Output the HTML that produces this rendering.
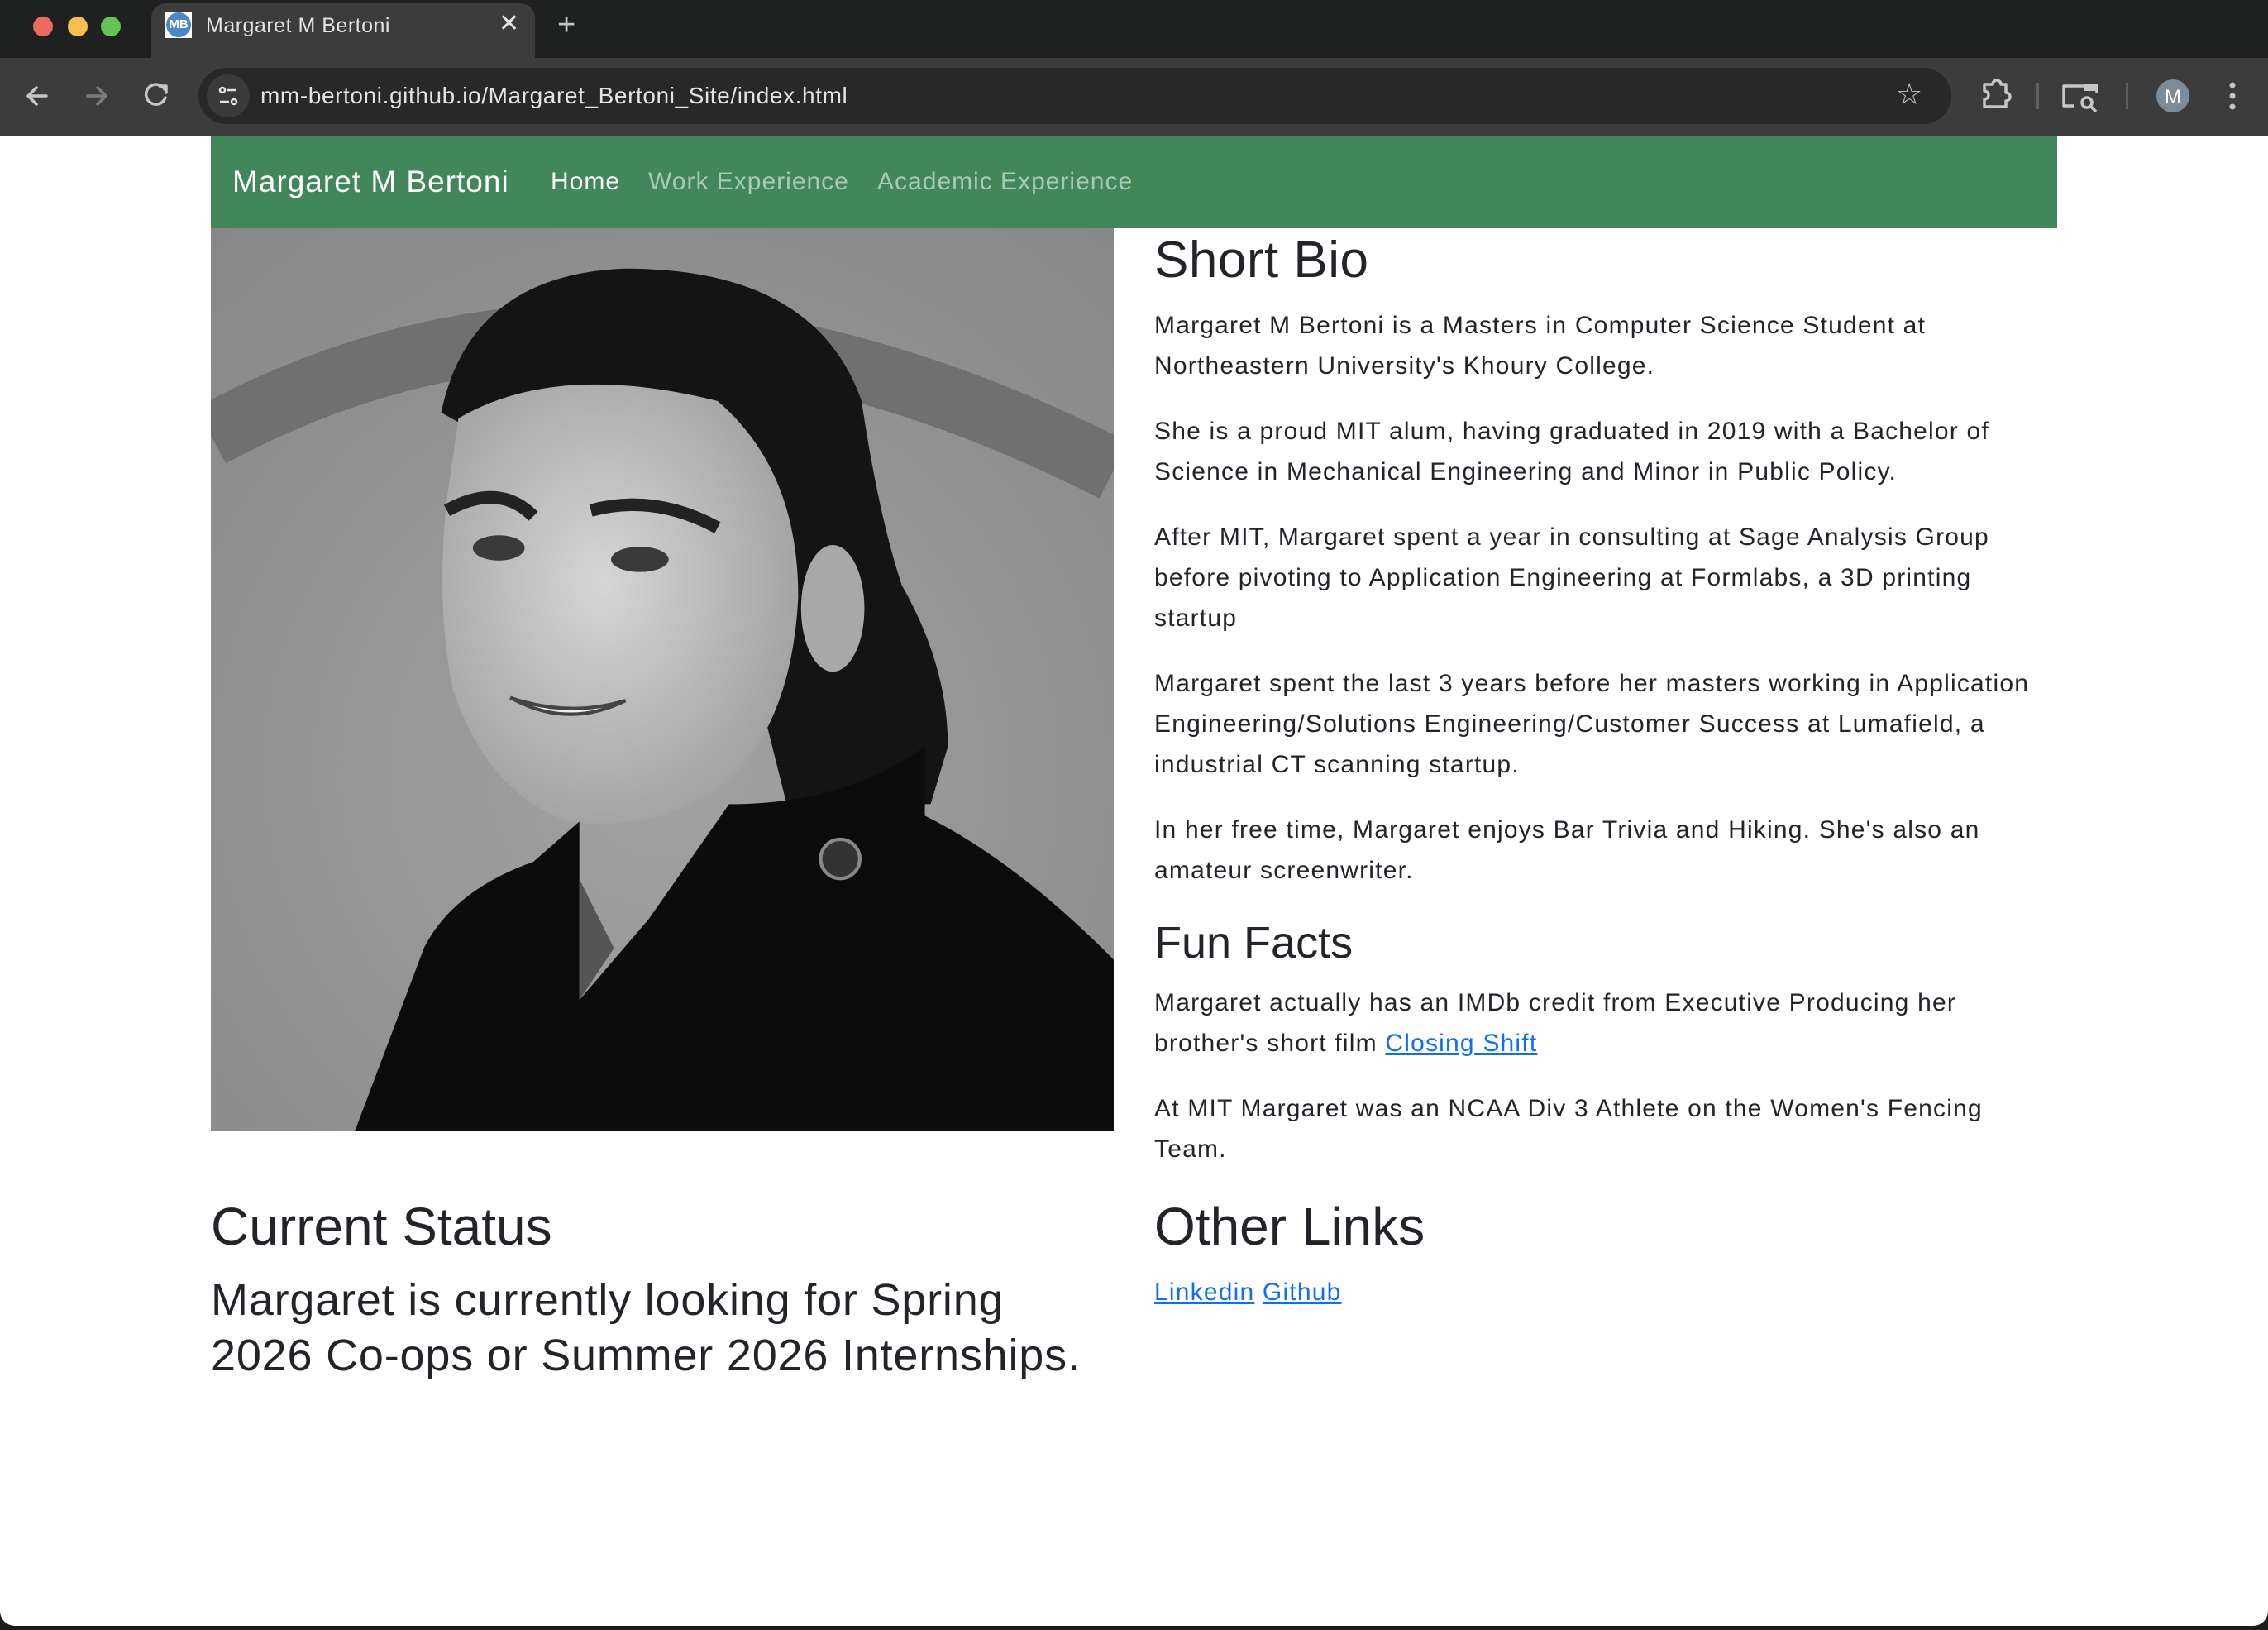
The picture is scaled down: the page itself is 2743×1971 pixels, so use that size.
<!DOCTYPE html>
<html><head><meta charset="utf-8"><style>
*{margin:0;padding:0;box-sizing:border-box}
html,body{width:2743px;height:1971px;overflow:hidden;background:#1b1d1a}
body{font-family:"Liberation Sans",sans-serif;position:relative}
.abs{position:absolute;white-space:nowrap}
#win{position:absolute;left:0;top:0;width:2743px;height:1966px;background:#fff;border-radius:0 0 18px 18px;overflow:hidden}
#tabbar{position:absolute;left:0;top:0;width:2743px;height:70px;background:#1f2020}
#tab{position:absolute;left:183px;top:4px;width:464px;height:70px;background:#3c3c3c;border-radius:18px 18px 0 0}
#toolbar{position:absolute;left:0;top:70px;width:2743px;height:94px;background:#3c3c3c}
#omni{position:absolute;left:240px;top:12px;width:2120px;height:68px;background:#282828;border-radius:34px}
#nav{position:absolute;left:255px;top:164px;width:2233px;height:112px;background:#41875a}
.txt{color:#212529;font-size:30px;line-height:49px;letter-spacing:1.2px}
.txt p{margin-bottom:30px}
a{color:#0d6efd;text-decoration:underline}
</style></head><body>
<div id="win">
<div id="tabbar">
  <div class="abs" style="left:40px;top:20px;width:24px;height:24px;border-radius:50%;background:#ee6a5f"></div>
  <div class="abs" style="left:82px;top:20px;width:24px;height:24px;border-radius:50%;background:#f5bf4f"></div>
  <div class="abs" style="left:122px;top:20px;width:24px;height:24px;border-radius:50%;background:#62c554"></div>
  <div id="tab">
    <div class="abs" style="left:17px;top:10px;width:32px;height:32px;background:#fff;"><div style="position:absolute;left:1px;top:1px;width:30px;height:30px;border-radius:50%;background:#4a86c8;color:#fff;font-size:15px;font-weight:bold;line-height:30px;text-align:center">MB</div></div>
    <div class="abs" style="left:66px;top:12px;font-size:25px;color:#e3e3e3;line-height:30px;letter-spacing:0.5px">Margaret M Bertoni</div>
    <div class="abs" style="left:420px;top:8px;font-size:30px;color:#e3e3e3;line-height:34px">✕</div>
  </div>
  <div class="abs" style="left:674px;top:8px;font-size:38px;color:#c4c7c5;line-height:44px">+</div>
</div>
<div id="toolbar">
  <svg class="abs" style="left:0;top:0" width="240" height="94" viewBox="0 0 240 94">
    <g fill="none" stroke-width="3.5" stroke-linecap="round" stroke-linejoin="round">
      <path d="M34 46 H56 M44 36 L34 46 L44 56" stroke="#c4c7c5"/>
      <path d="M106 46 H128 M118 36 L128 46 L118 56" stroke="#7b7d7c"/>
      <path d="M199 38 A12 12 0 1 0 200 48" stroke="#c4c7c5"/>
      <path d="M193 34 H201 V42" stroke="#c4c7c5"/>
    </g>
  </svg>
  <div id="omni">
    <div class="abs" style="left:10px;top:8px;width:52px;height:52px;border-radius:50%;background:#3a3a3a"></div>
    <svg class="abs" style="left:20px;top:18px" width="32" height="32" viewBox="0 0 32 32"><g fill="none" stroke="#e3e3e3" stroke-width="2.5"><circle cx="9" cy="9" r="3"/><path d="M15 9 H26"/><circle cx="23" cy="23" r="3"/><path d="M6 23 H17"/></g></svg>
    <div class="abs" style="left:75px;top:17px;font-size:28px;color:#e3e3e3;line-height:34px;letter-spacing:0.6px">mm-bertoni.github.io/Margaret_Bertoni_Site/index.html</div>
    <div class="abs" style="left:2053px;top:12px;font-size:36px;color:#c4c7c5;line-height:40px">☆</div>
  </div>
  <svg class="abs" style="left:2390px;top:20px" width="353" height="56" viewBox="0 0 353 56">
    <g fill="none" stroke="#c4c7c5" stroke-width="3.5" stroke-linejoin="round">
      <path d="M10 12 H20 A5 5 0 0 1 30 12 H36 V22 A5 5 0 0 1 36 32 V39 H10 V30 A5 5 0 0 0 10 20 Z"/>
      <path d="M118 38 H106 V14 H146 V22"/>
      <circle cx="134" cy="34" r="6"/><path d="M139 39 L145 45"/>
    </g>
    <rect x="130" y="12" width="18" height="8" fill="#c4c7c5"/>
    <rect x="73" y="10" width="3" height="32" fill="#5f6160"/>
    <rect x="181" y="10" width="3" height="32" fill="#5f6160"/>
    <circle cx="238" cy="26" r="20" fill="#7a8c99"/>
    <text x="238" y="35" fill="#fff" font-size="24" text-anchor="middle" font-family="Liberation Sans">M</text>
    <circle cx="310" cy="13" r="3.5" fill="#c4c7c5"/><circle cx="310" cy="26" r="3.5" fill="#c4c7c5"/><circle cx="310" cy="39" r="3.5" fill="#c4c7c5"/>
  </svg>
</div>
<div id="nav">
  <div class="abs" style="left:26px;top:34px;font-size:37px;color:#fff;line-height:44px;letter-spacing:1px">Margaret M Bertoni</div>
  <div class="abs" style="left:411px;top:36px;font-size:30px;color:#fff;line-height:40px;letter-spacing:1px">Home</div>
  <div class="abs" style="left:529px;top:36px;font-size:30px;color:rgba(255,255,255,.55);line-height:40px;letter-spacing:1px">Work Experience</div>
  <div class="abs" style="left:806px;top:36px;font-size:30px;color:rgba(255,255,255,.55);line-height:40px;letter-spacing:1px">Academic Experience</div>
</div>
<svg class="abs" style="left:255px;top:276px" width="1092" height="1092" viewBox="0 0 1568 1568" preserveAspectRatio="none">
  <defs>
    <radialGradient id="bg" cx="0.5" cy="0.6" r="0.8"><stop offset="0" stop-color="#a2a2a2"/><stop offset="1" stop-color="#868686"/></radialGradient>
    <radialGradient id="fc" cx="0.45" cy="0.45" r="0.6"><stop offset="0" stop-color="#d6d6d6"/><stop offset="1" stop-color="#a0a0a0"/></radialGradient>
  </defs>
  <rect width="1568" height="1568" fill="url(#bg)"/>
  <path d="M0 360 Q700 -20 1568 420" fill="none" stroke="#707070" stroke-width="110"/>
  <path d="M400 320 Q450 80 720 70 Q1050 70 1130 300 Q1160 500 1200 620 Q1280 760 1280 900 L1250 1000 L1000 1000 L900 600 Z" fill="#141414"/>
  <path d="M430 330 Q600 230 880 300 Q1020 420 1020 640 Q1010 850 900 960 Q780 1050 620 1030 Q480 980 420 800 Q390 650 410 470 Z" fill="url(#fc)"/>
  <ellipse cx="1080" cy="660" rx="55" ry="110" fill="#a8a8a8"/>
  <path d="M410 490 Q500 440 560 500" stroke="#222" stroke-width="22" fill="none"/>
  <path d="M660 490 Q770 460 880 520" stroke="#222" stroke-width="22" fill="none"/>
  <ellipse cx="500" cy="555" rx="45" ry="22" fill="#3a3a3a"/>
  <ellipse cx="745" cy="575" rx="50" ry="22" fill="#3a3a3a"/>
  <path d="M520 815 Q620 850 720 820 Q620 870 520 815Z" fill="#eee" stroke="#444" stroke-width="6"/>
  <path d="M640 1030 L560 1100 Q420 1150 370 1250 L250 1568 L1568 1568 L1568 1270 Q1400 1100 1240 1020 L1240 900 Q1100 1000 900 1000 L760 1200 L640 1340 Z" fill="#0c0c0c"/>
  <path d="M640 1130 L700 1250 L640 1340 Z" fill="#555"/>
  <circle cx="1093" cy="1095" r="34" fill="#333" stroke="#888" stroke-width="6"/>
</svg>
<div class="abs" style="left:1396px;top:278px;font-size:62px;line-height:74px;color:#212529;font-weight:500;letter-spacing:0.5px">Short Bio</div>
<div class="abs txt" style="left:1396px;top:369px">
<p>Margaret M Bertoni is a Masters in Computer Science Student at<br>Northeastern University's Khoury College.</p>
<p>She is a proud MIT alum, having graduated in 2019 with a Bachelor of<br>Science in Mechanical Engineering and Minor in Public Policy.</p>
<p>After MIT, Margaret spent a year in consulting at Sage Analysis Group<br>before pivoting to Application Engineering at Formlabs, a 3D printing<br>startup</p>
<p>Margaret spent the last 3 years before her masters working in Application<br>Engineering/Solutions Engineering/Customer Success at Lumafield, a<br>industrial CT scanning startup.</p>
<p>In her free time, Margaret enjoys Bar Trivia and Hiking. She's also an<br>amateur screenwriter.</p>
</div>
<div class="abs" style="left:1396px;top:1108px;font-size:54px;line-height:65px;color:#212529;font-weight:500;letter-spacing:0px">Fun Facts</div>
<div class="abs txt" style="left:1396px;top:1188px">
<p>Margaret actually has an IMDb credit from Executive Producing her<br>brother's short film <a>Closing Shift</a></p>
<p>At MIT Margaret was an NCAA Div 3 Athlete on the Women's Fencing<br>Team.</p>
</div>
<div class="abs" style="left:255px;top:1445px;font-size:64px;line-height:77px;color:#212529;font-weight:500;letter-spacing:0px">Current Status</div>
<div class="abs" style="left:1396px;top:1445px;font-size:64px;line-height:77px;color:#212529;font-weight:500;letter-spacing:0px">Other Links</div>
<div class="abs" style="left:255px;top:1539px;font-size:54px;line-height:67px;color:#212529;font-weight:500;letter-spacing:0.8px">Margaret is currently looking for Spring<br>2026 Co-ops or Summer 2026 Internships.</div>
<div class="abs txt" style="left:1396px;top:1538px"><a>Linkedin</a> <a>Github</a></div>
</div>
</body></html>
